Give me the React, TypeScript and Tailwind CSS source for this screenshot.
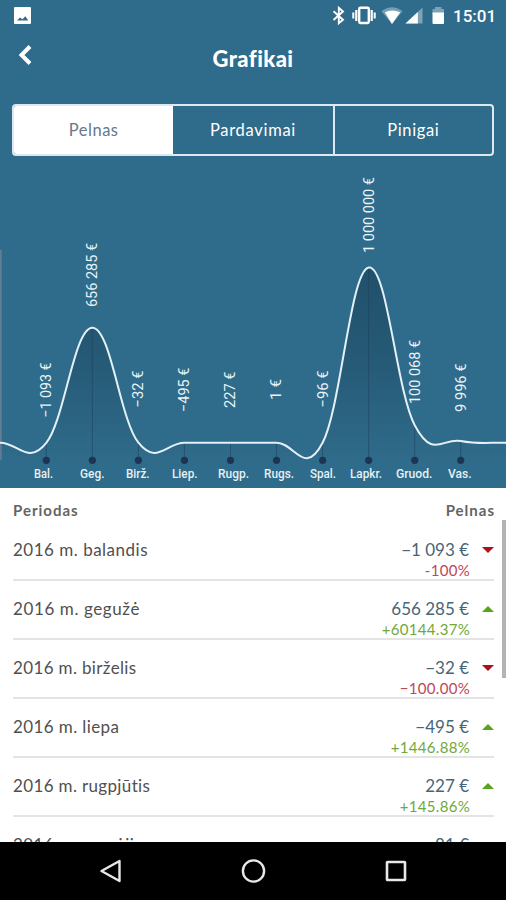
import React from 'react';

type Month = { label: string; value: number; text: string; bottom: number; length: number; labelX: number; labelW: number };

const months: Month[] = [
  { label: 'Bal.', value: -1093, text: '−1 093 €', bottom: 417.5, length: 55, labelX: 34, labelW: 19 },
  { label: 'Geg.', value: 656285, text: '656 285 €', bottom: 307, length: 64, labelX: 80, labelW: 24.5 },
  { label: 'Birž.', value: -32, text: '−32 €', bottom: 407.5, length: 37, labelX: 126, labelW: 23.5 },
  { label: 'Liep.', value: -495, text: '−495 €', bottom: 412, length: 44.5, labelX: 172, labelW: 25.5 },
  { label: 'Rugp.', value: 227, text: '227 €', bottom: 408, length: 36.5, labelX: 218, labelW: 31 },
  { label: 'Rugs.', value: 1, text: '1 €', bottom: 400, length: 21, labelX: 264, labelW: 30 },
  { label: 'Spal.', value: -96, text: '−96 €', bottom: 407.5, length: 37, labelX: 310, labelW: 26 },
  { label: 'Lapkr.', value: 1000000, text: '1 000 000 €', bottom: 253, length: 76, labelX: 350, labelW: 32 },
  { label: 'Gruod.', value: 100068, text: '100 068 €', bottom: 404, length: 64, labelX: 396, labelW: 36.5 },
  { label: 'Vas.', value: 9996, text: '9 996 €', bottom: 412, length: 48.5, labelX: 448, labelW: 23.5 },
];

const STEP = 46.05;
const xAt = (i: number) => 46.3 + i * STEP;
const yAt = (v: number) => 442.7 - v * 0.0001752;

function buildCurve() {
  const values = [0, 0, ...months.map((m) => m.value), 0, 0];
  const pts = values.map((v, i) => ({ x: xAt(i - 2), y: yAt(v) }));
  const k = 0.2;
  let d = `M${pts[0].x} ${pts[0].y}`;
  for (let i = 1; i < pts.length; i++) {
    const before = pts[Math.max(i - 2, 0)];
    const a = pts[i - 1];
    const b = pts[i];
    const after = pts[Math.min(i + 1, pts.length - 1)];
    d += ` C${a.x + (b.x - before.x) * k} ${a.y + (b.y - before.y) * k} ${b.x - (after.x - a.x) * k} ${b.y - (after.y - a.y) * k} ${b.x} ${b.y}`;
  }
  return { line: d, area: `${d} V460 H${pts[0].x} Z` };
}

const curve = buildCurve();

type Row = { period: string; tracking: string; amount: string; change?: string; up?: boolean };

const rows: Row[] = [
  { period: '2016 m. balandis', tracking: 'tracking-[0.5px]', amount: '−1 093 €', change: '-100%', up: false },
  { period: '2016 m. gegužė', tracking: 'tracking-[0.6px]', amount: '656 285 €', change: '+60144.37%', up: true },
  { period: '2016 m. birželis', tracking: 'tracking-[0.35px]', amount: '−32 €', change: '−100.00%', up: false },
  { period: '2016 m. liepa', tracking: 'tracking-[0.4px]', amount: '−495 €', change: '+1446.88%', up: true },
  { period: '2016 m. rugpjūtis', tracking: 'tracking-[0.35px]', amount: '227 €', change: '+145.86%', up: true },
  { period: '2016 m. rugsėjis', tracking: 'tracking-[0.4px]', amount: '81 €' },
];

function StatusBar() {
  return (
    <div className="flex h-8 shrink-0 items-center justify-between pr-[11px] pl-[14px]">
      <svg className="-mt-px" width="17" height="17" viewBox="0 0 17 17">
        <path fillRule="evenodd" fill="#fff" d="M1 0h15a1 1 0 0 1 1 1v15a1 1 0 0 1-1 1H1a1 1 0 0 1-1-1V1a1 1 0 0 1 1-1zM3 13.500h11.300L11.300 9.200 8.500 12.200 6 10.500z" />
      </svg>
      <div className="flex items-center">
        <svg width="116" height="20" viewBox="330 6 116 20">
          <path d="M333.500 11.200 343 19.800 338.800 23.300V7.800L343 11.500 333.500 20" fill="none" stroke="#fff" strokeWidth="1.900" />
          <rect x="359.200" y="7.800" width="9.600" height="15.200" rx="1.200" fill="none" stroke="#fff" strokeWidth="2.400" />
          <path d="M356.300 10v11M371.700 10v11" stroke="#fff" strokeWidth="2.200" />
          <path d="M353.300 12.500v6M374.700 12.500v6" stroke="#fff" strokeWidth="2" />
          <path d="M381.500 11.200Q392 3.500 402.500 11.200L392 24z" fill="#fff" opacity=".35" />
          <path d="M384.800 12.200Q392 9 400.200 12.200L392 24z" fill="#fff" />
          <path d="M422.500 7.500v16h-17z" fill="#fff" opacity=".38" />
          <path d="M417.800 12v11.500h-12.300z" fill="#fff" />
          <path d="M435 7h6.500v2h2.500v5h-11.500V9h2.500z" fill="#fff" opacity=".38" />
          <path d="M432.500 12.500h11.500v10.500a1 1 0 0 1-1 1h-9.500a1 1 0 0 1-1-1z" fill="#fff" />
        </svg>
        <span className="ml-[7px] w-[42px] font-['Roboto',sans-serif] text-[17px] leading-8 font-medium text-white">15:01</span>
      </div>
    </div>
  );
}

function Tabs() {
  return (
    <div className="mx-3 mt-6 grid h-[52px] shrink-0 grid-cols-3 overflow-hidden rounded border-2 border-[#dce9f0] text-[16.5px] text-white">
      <div className="flex items-center justify-center bg-white tracking-[0.5px] text-[#66798a]">Pelnas</div>
      <div className="flex items-center justify-center tracking-[0.7px]">Pardavimai</div>
      <div className="flex items-center justify-center border-l-2 border-[#dce9f0] tracking-[0.6px]">Pinigai</div>
    </div>
  );
}

function Chart() {
  return (
    <svg className="block shrink-0" width="506" height="332" viewBox="0 156 506 332" fontFamily="Roboto, sans-serif">
      <defs>
        <linearGradient id="fill" gradientUnits="userSpaceOnUse" x1="0" y1="267" x2="0" y2="460">
          <stop offset="0" stopColor="#1d4a63" stopOpacity=".8" />
          <stop offset=".45" stopColor="#1d4a63" stopOpacity=".55" />
          <stop offset="1" stopColor="#1d4a63" stopOpacity="0" />
        </linearGradient>
      </defs>
      <rect x="0" y="250" width="1.800" height="210" fill="#637c93" />
      <path d={curve.area} fill="url(#fill)" />
      {months.map((m, i) => (
        <line key={m.label} x1={xAt(i)} x2={xAt(i)} y1={yAt(m.value)} y2="460" stroke="#1c3e57" strokeOpacity=".5" />
      ))}
      <path d={curve.line} fill="none" stroke="#e3f0f7" strokeWidth="2" />
      {months.map((m, i) => (
        <g key={m.label}>
          <circle cx={xAt(i)} cy="460.300" r="3.600" fill="#1d3552" />
          <text x={m.labelX} y="477.700" fontSize="12" fontWeight="500" fill="#e6f0f5" textLength={m.labelW} lengthAdjust="spacingAndGlyphs">{m.label}</text>
          <text transform={`translate(${xAt(i) + 4.900} ${m.bottom}) rotate(-90)`} fontSize="15" fill="#eaf3f8" textLength={m.length} lengthAdjust="spacingAndGlyphs">{m.text}</text>
        </g>
      ))}
    </svg>
  );
}

function TableRow({ row }: { row: Row }) {
  return (
    <div className="flex h-[59px] shrink-0 items-start border-b-2 border-[#e4e4e4]">
      <span className={`pt-4 text-[17px] leading-6 text-[#505050] ${row.tracking}`}>{row.period}</span>
      <div className="ml-auto flex flex-col items-end pt-4">
        <span className="text-[17px] leading-6 text-[#486576]">{row.amount}</span>
        {row.change && (
          <span className={`-mt-px -mr-px text-[15px] leading-[18px] tracking-[0.3px] ${row.up ? 'text-[#70a83c]' : 'text-[#bd4757]'}`}>{row.change}</span>
        )}
      </div>
      <svg className="mt-[25px] ml-[13px]" width="12" height="6" viewBox="0 0 12 6">
        {row.change && (row.up ? <path d="M0 6 6 0l6 6z" fill="#58a51b" /> : <path d="M0 0h12L6 6z" fill="#b00d1a" />)}
      </svg>
    </div>
  );
}

export default function App() {
  return (
    <div className="flex h-[900px] w-[506px] flex-col overflow-hidden bg-white font-['Lato','Open_Sans',sans-serif]">
      <header className="flex h-[488px] shrink-0 flex-col bg-[#2f6b8a]">
        <StatusBar />
        <div className="grid h-12 shrink-0 grid-cols-[1fr_auto_1fr] items-center">
          <svg className="mb-[2px] ml-[18px]" width="14" height="22" viewBox="0 0 14 22">
            <path d="M12 2.500 3.500 11l8.500 8.500" fill="none" stroke="#fff" strokeWidth="4" />
          </svg>
          <h1 className="pt-[5px] text-[22px] leading-8 font-black tracking-[0.4px] text-white">Grafikai</h1>
        </div>
        <Tabs />
        <Chart />
      </header>
      <main className="flex h-[354px] shrink-0 overflow-hidden">
        <div className="flex flex-1 flex-col pr-[2px] pl-[13px]">
          <div className="flex h-[34px] shrink-0 justify-between pt-[10px] pr-[5px] text-[15px] leading-6 font-bold tracking-[1px] text-[#646464]">
            <span>Periodas</span>
            <span>Pelnas</span>
          </div>
          <div className="flex flex-col pr-[6px]">
            {rows.map((row) => (
              <TableRow key={row.period} row={row} />
            ))}
          </div>
        </div>
        <div className="mt-8 h-[158px] w-1 bg-[#b3b3b3]" />
      </main>
      <nav className="flex h-[58px] shrink-0 items-center justify-center gap-[117px] bg-black">
        <svg width="26" height="26" viewBox="0 0 26 26">
          <path d="M22.500 3v20L4.500 13z" fill="none" stroke="#e8e8e8" strokeWidth="2.400" strokeLinejoin="round" />
        </svg>
        <svg width="26" height="26" viewBox="0 0 26 26">
          <circle cx="13.500" cy="13" r="10.600" fill="none" stroke="#e8e8e8" strokeWidth="2.400" />
        </svg>
        <svg width="26" height="26" viewBox="0 0 26 26">
          <rect x="4" y="4" width="18" height="18" rx=".5" fill="none" stroke="#e8e8e8" strokeWidth="2.600" />
        </svg>
      </nav>
    </div>
  );
}
